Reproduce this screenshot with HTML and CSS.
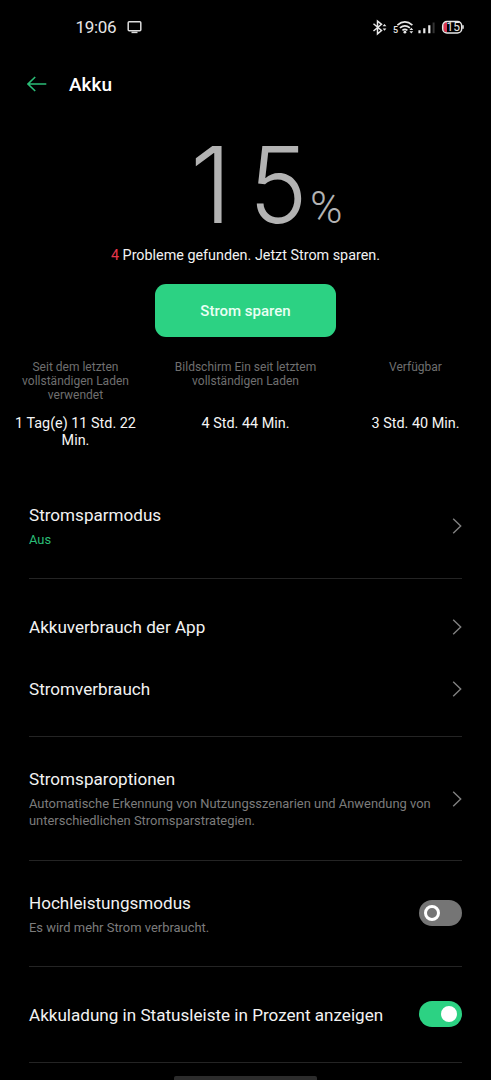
FILE: index.html
```html
<!DOCTYPE html>
<html lang="de">
<head>
<meta charset="utf-8">
<title>Akku</title>
<link rel="stylesheet" href="styles.css">
</head>
<body>
<main class="screen">
  <header class="status">
    <span class="clock">19:06</span>
    <svg class="cast" width="16" height="14" viewBox="0 0 16 14" fill="none" stroke="#ddd" stroke-width="1.5"><rect x="1.2" y="1.7" width="12.6" height="9" rx="1"/><path d="M4.5 12.4h6"/></svg>
    <svg class="indicators" width="106" height="20" viewBox="0 0 106 20" fill="none" stroke="#e8e8e8" stroke-width="1.5">
      <path d="M2.5 6.7l8 6.8-4 3.3V4l4 3.3-8 6.7"/>
      <path d="M11.6 9.2l1.9-2.2 1.9 2.2zM11.6 11.6l1.9 2.2 1.9-2.2z" fill="#e8e8e8" stroke="none"/>
      <text class="wifi-band" x="22" y="16.3">5</text>
      <path d="M26.4 8.2q7.5-6.5 15 0M28.9 10.9q5-4.2 10 0M31.4 13.4q2.5-2 5 0" stroke-width="1.7"/>
      <circle cx="33.9" cy="15.2" r="1.4" fill="#e8e8e8" stroke="none"/>
      <path d="M38.4 13l1.9-2.2 1.9 2.2zM38.4 14.3l1.9 2.2 1.9-2.2z" fill="#e8e8e8" stroke="none"/>
      <path d="M48.5 16.2v-3M53.3 16.2v-5M58.3 16.2v-8" stroke-width="2.2"/>
      <path d="M62.6 16.2V5.5" stroke="#333" stroke-width="2"/>
      <path d="M76 4.7h-1q-3 .8-3 5.3t3 5.3h1z" fill="#d93650" stroke="none"/>
      <rect x="71.7" y="4.6" width="19" height="11.4" rx="4.3"/>
      <path d="M92 8.3v3.5" stroke-width="1.5"/>
      <text class="battery-level" x="75.5" y="14.4">15</text>
    </svg>
  </header>

  <nav class="bar">
    <svg width="20" height="16" viewBox="0 0 20 16" fill="none" stroke="#2bbd77" stroke-width="1.6"><path d="M19.3 8H1M8.2 1L1 8l7.2 7"/></svg>
    <h1 class="heading">Akku</h1>
  </nav>

  <section class="summary">
    <div class="level"><span class="digit one">1</span><span class="digit five">5</span><span class="percent">%</span></div>
    <p class="notice"><span class="count">4</span> Probleme gefunden. Jetzt Strom sparen.</p>
    <button class="save">Strom sparen</button>
    <div class="stats">
      <div class="stat"><p class="label">Seit dem letzten<br>vollständigen Laden<br>verwendet</p><p class="value">1 Tag(e) 11 Std. 22<br>Min.</p></div>
      <div class="stat"><p class="label">Bildschirm Ein seit letztem<br>vollständigen Laden</p><p class="value">4 Std. 44 Min.</p></div>
      <div class="stat"><p class="label">Verfügbar</p><p class="value">3 Std. 40 Min.</p></div>
    </div>
  </section>

  <section class="group first">
    <div class="row mode">
      <div class="text"><h2 class="title">Stromsparmodus</h2><p class="sub on">Aus</p></div>
      <svg class="chevron" viewBox="0 0 10 16"><path d="M1.2.8L8.7 8l-7.5 7.2"/></svg>
    </div>
  </section>
  <section class="group">
    <div class="row single">
      <h2 class="title">Akkuverbrauch der App</h2>
      <svg class="chevron" viewBox="0 0 10 16"><path d="M1.2.8L8.7 8l-7.5 7.2"/></svg>
    </div>
    <div class="row single">
      <h2 class="title">Stromverbrauch</h2>
      <svg class="chevron" viewBox="0 0 10 16"><path d="M1.2.8L8.7 8l-7.5 7.2"/></svg>
    </div>
  </section>
  <section class="group">
    <div class="row options">
      <div class="text"><h2 class="title">Stromsparoptionen</h2><p class="sub">Automatische Erkennung von Nutzungsszenarien und Anwendung von<br>unterschiedlichen Stromsparstrategien.</p></div>
      <svg class="chevron" viewBox="0 0 10 16"><path d="M1.2.8L8.7 8l-7.5 7.2"/></svg>
    </div>
  </section>
  <section class="group">
    <div class="row performance">
      <div class="text"><h2 class="title">Hochleistungsmodus</h2><p class="sub">Es wird mehr Strom verbraucht.</p></div>
      <span class="switch"><span class="knob"></span></span>
    </div>
  </section>
  <section class="group">
    <div class="row single">
      <h2 class="title">Akkuladung in Statusleiste in Prozent anzeigen</h2>
      <span class="switch checked"><span class="knob"></span></span>
    </div>
  </section>
  <footer class="gesture"></footer>
</main>
</body>
</html>
```

FILE: styles.css
```css
* { box-sizing: border-box; margin: 0; padding: 0; }
body { background: #000; color: #f2f2f2; font-family: Roboto, "Liberation Sans", sans-serif; }
.screen { width: 491px; height: 1080px; overflow: hidden; display: flex; flex-direction: column; }

.status { height: 54px; padding: 0 22px 0 75.5px; display: flex; align-items: center; }
.clock { font-size: 17px; line-height: 20px; letter-spacing: -0.3px; color: #e6e6e6; width: 51px; }
.indicators { margin-left: auto; width: 106px; margin-right: -8px; }
.wifi-band { font-size: 9px; font-weight: 500; fill: #e8e8e8; stroke: none; }
.battery-level { font-size: 12px; fill: #e8e8e8; stroke: none; }

.bar { height: 60px; padding-left: 27px; display: flex; align-items: center; gap: 22px; }
.heading { font-size: 19px; line-height: 26px; padding-top: 1px; font-weight: 500; color: #fff; }

.summary { height: 376px; padding-top: 21px; display: flex; flex-direction: column; align-items: center; }
.level { height: 99px; width: 100%; padding-left: 190px; display: flex; align-items: baseline; color: #b3b3b3; font-weight: 300; line-height: 100px; }
.digit { font-size: 106px; font-family: Inter, Roboto, sans-serif; }
.one { width: 59px; }
.five { width: 61px; transform: scaleX(.93); transform-origin: left; }
.percent { font-size: 44px; }
.notice { margin-top: 12px; font-size: 14.35px; line-height: 20px; color: #f2f2f2; }
.count { color: #e8364c; }
.save { margin-top: 18px; width: 181px; height: 53px; flex: none; border: 0; border-radius: 11px; background: #2cd283; color: #e9fff3; font: 500 15px/20px Roboto, sans-serif; }
.stats { width: 100%; margin-top: 23px; display: grid; grid-template-columns: 151px 189px 151px; text-align: center; }
.stat { display: flex; flex-direction: column; }
.label { height: 55px; font-size: 12px; line-height: 14px; color: #6f6f6f; }
.value { font-size: 14.4px; line-height: 17px; color: #f5f5f5; white-space: nowrap; }

.group { margin: 0 29px; padding: 17px 0 16px; border-bottom: 1px solid #242424; }
.first { padding-top: 0; }
.row { display: flex; align-items: center; justify-content: space-between; }
.mode { height: 72px; }
.single { height: 62px; }
.options { height: 90px; }
.performance { height: 72px; }
.title { font-size: 17.08px; line-height: 22px; font-weight: 400; color: #f2f2f2; white-space: nowrap; }
.sub { margin-top: 4px; font-size: 12.93px; line-height: 17.5px; color: #7c7c7c; white-space: nowrap; }
.mode .sub, .performance .sub { padding-top: 1px; }
.options .sub { margin-top: 5px; }
.options .text { margin-bottom: 1px; }
.on { color: #2bbd77; }
.chevron { width: 10px; height: 16px; flex: none; margin-bottom: 1px; fill: none; stroke: #808080; stroke-width: 1.4; }
.switch { width: 43px; height: 26px; flex: none; margin-bottom: 2px; padding: 5px; border-radius: 13px; background: #757575; display: flex; }
.knob { width: 16px; height: 16px; border: 3.4px solid #fff; border-radius: 50%; }
.checked { background: #2cd283; justify-content: flex-end; }
.checked .knob { background: #fff; }
.gesture { width: 143px; height: 4px; margin: auto auto 0; border-radius: 2px 2px 0 0; background: #2c2c2c; }
```
